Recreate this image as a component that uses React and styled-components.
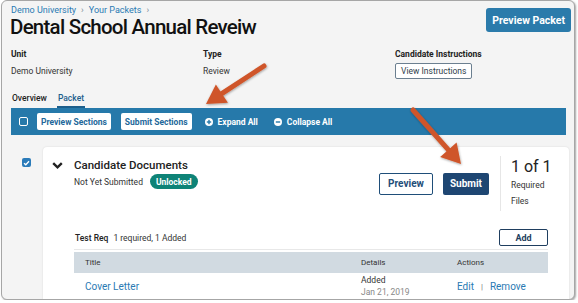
import React from "react";
import styled, { createGlobalStyle } from "styled-components";

const Global = createGlobalStyle`
  html, body { margin: 0; padding: 0; background: #ffffff; }
  body { font-family: Roboto, "Liberation Sans", Arial, sans-serif; color: #2b2b2b; }
  * { box-sizing: border-box; }
`;

const Window = styled.div`
  position: relative;
  margin: 0 3px 0 1px;
  height: 300px;
  border: 1px solid #a6a6a6;
  border-radius: 6px;
  background: #f4f4f4;
  overflow: hidden;
  box-shadow: 1px 1px 2px rgba(0, 0, 0, 0.35);
`;

const Header = styled.div`
  display: flex;
  justify-content: space-between;
  align-items: flex-start;
  padding: 3px 3px 0 9px;
`;

const Breadcrumb = styled.div`
  display: flex;
  gap: 5px;
  font-size: 9px;
  line-height: 12px;
  color: #2a7ab3;
`;

const Crumb = styled.span`
  color: ${(p) => (p.sep ? "#7a8a96" : "#2a7ab3")};
`;

const Title = styled.h1`
  margin: 1px 0 0 -1px;
  font-family: Roboto, sans-serif;
  font-weight: 500;
  font-size: 20.5px;
  line-height: 20px;
  letter-spacing: -0.75px;
  color: #111;
`;

const PrimaryBtn = styled.button`
  margin-top: 4px;
  height: 24px;
  padding: 0 6px;
  border: none;
  border-radius: 3px;
  background: #2b7bab;
  color: #fff;
  font-family: Roboto, sans-serif;
  font-weight: 700;
  font-size: 10.5px;
`;

const Meta = styled.div`
  display: grid;
  grid-template-columns: 192px 192px auto;
  padding-left: 9px;
  margin-top: 11px;
`;

const MetaCol = styled.div`
  display: flex;
  flex-direction: column;
  align-items: flex-start;
`;

const Label = styled.div`
  font-size: 8.5px;
  line-height: 12px;
  font-weight: 700;
  color: #222;
`;

const Value = styled.div`
  margin-top: 5px;
  font-size: 8.5px;
  line-height: 12px;
  color: #333;
`;

const OutlineBtn = styled.button`
  margin-top: 3px;
  height: 16px;
  padding: 0 5px;
  border: 1px solid #6b7f90;
  border-radius: 2px;
  background: #fff;
  color: #2f3d4a;
  font-family: Roboto, sans-serif;
  font-size: 8.5px;
`;

const Tabs = styled.div`
  display: flex;
  gap: 9px;
  padding-left: 9px;
  margin-top: 13px;
`;

const Tab = styled.div`
  font-size: 8.5px;
  line-height: 12px;
  font-weight: 500;
  padding: 0 1px 2px;
  border-bottom: 2px solid ${(p) => (p.active ? "#1d5f8c" : "transparent")};
  color: ${(p) => (p.active ? "#1d5f8c" : "#222")};
`;

const Toolbar = styled.div`
  display: flex;
  align-items: center;
  height: 27px;
  margin: 0 8px 0 9px;
  padding-left: 8px;
  background: #2679aa;
`;

const ToolCheck = styled.div`
  width: 9px;
  height: 9px;
  border: 1.5px solid #fff;
  border-radius: 2px;
  margin-right: 9px;
`;

const ToolBtn = styled.button`
  height: 17px;
  padding: 0 4px;
  margin-right: 10px;
  border: none;
  border-radius: 2px;
  background: #fff;
  color: #23689a;
  font-family: Roboto, sans-serif;
  font-weight: 700;
  font-size: 8.5px;
`;

const ToolLink = styled.div`
  display: flex;
  align-items: center;
  gap: 5px;
  margin-left: ${(p) => p.ml || 0}px;
  color: #fff;
  font-size: 8.5px;
  font-weight: 700;
`;

const Body = styled.div`
  display: flex;
  margin-top: 12px;
`;

const Gutter = styled.div`
  width: 41px;
  padding: 11px 0 0 20px;
`;

const CheckedBox = styled.div`
  width: 9px;
  height: 9px;
  border-radius: 2px;
  background: #2b7bb9;
  display: flex;
  align-items: center;
  justify-content: center;
`;

const Card = styled.div`
  flex: 1;
  margin-right: 5px;
  height: 160px;
  background: #fff;
  border-radius: 4px 4px 0 0;
  box-shadow: 0 0 2px rgba(0, 0, 0, 0.12);
  padding: 10px 0 0 9px;
`;

const TopRow = styled.div`
  display: flex;
  align-items: flex-start;
`;

const Chevron = styled.div`
  width: 22px;
  padding-top: 5px;
  svg { display: block; }
`;

const TitleBlock = styled.div`
  flex: 1;
`;

const CardTitle = styled.div`
  font-size: 11.5px;
  line-height: 16px;
  font-weight: 500;
  color: #222;
`;

const StatusRow = styled.div`
  display: flex;
  align-items: center;
  gap: 7px;
  margin-top: 1px;
`;

const StatusText = styled.span`
  font-size: 8.5px;
  color: #333;
`;

const Badge = styled.span`
  display: inline-flex;
  align-items: center;
  height: 15px;
  padding: 0 6px;
  border-radius: 8px;
  background: #0e8377;
  color: #fff;
  font-size: 8.5px;
  font-weight: 700;
`;

const RightGroup = styled.div`
  display: flex;
  align-items: center;
  margin-top: -1px;
`;

const CardBtn = styled.button`
  height: 22px;
  padding: 0 ${(p) => (p.solid ? 7 : 8)}px;
  margin-right: ${(p) => p.mr}px;
  border: ${(p) => (p.solid ? "none" : "1.5px solid #1f4e79")};
  border-radius: 2px;
  background: ${(p) => (p.solid ? "#1e4672" : "#fff")};
  color: ${(p) => (p.solid ? "#fff" : "#1f4e79")};
  font-family: Roboto, sans-serif;
  font-weight: 700;
  font-size: 10px;
`;

const Divider = styled.div`
  width: 1px;
  height: 55px;
  background: #e6e6e6;
  margin-right: 10px;
`;

const Count = styled.div`
  width: 58px;
  margin-top: -2px;
`;

const CountBig = styled.div`
  font-size: 16px;
  line-height: 20px;
  color: #222;
`;

const CountSmall = styled.div`
  font-size: 8.5px;
  line-height: 16px;
  color: #333;
`;

const Section = styled.div`
  margin: 18px 21px 0 22px;
`;

const ReqRow = styled.div`
  display: flex;
  align-items: center;
  justify-content: space-between;
  padding-left: 1px;
  padding-bottom: 3px;
  border-bottom: 1px solid #e8e8e8;
`;

const ReqText = styled.div`
  font-size: 8.5px;
  color: #333;
  b { font-weight: 500; color: #222; margin-right: 5px; }
`;

const AddBtn = styled.button`
  width: 49px;
  height: 17px;
  border: 1.5px solid #1f3e5f;
  border-radius: 2px;
  background: #fff;
  color: #1f3e5f;
  font-family: Roboto, sans-serif;
  font-weight: 700;
  font-size: 9px;
`;

const TableHead = styled.div`
  display: grid;
  grid-template-columns: 276px 96px 1fr;
  align-items: center;
  height: 21px;
  margin-top: 2px;
  padding-left: 11px;
  background: #d1dae1;
  font-size: 8px;
  color: #333;
`;

const TableRow = styled.div`
  display: grid;
  grid-template-columns: 276px 96px 1fr;
  align-items: center;
  padding: 1px 0 0 11px;
`;

const LinkText = styled.span`
  color: #2a7ab3;
  font-size: ${(p) => p.size || 10}px;
`;

const Details = styled.div`
  font-size: 8.5px;
  line-height: 12px;
  color: #333;
`;

const Muted = styled.div`
  color: #888;
`;

const Actions = styled.div`
  display: flex;
  align-items: center;
  gap: 7px;
`;

const Pipe = styled.span`
  color: #777;
  font-size: 8px;
`;

const Overlay = styled.svg`
  position: absolute;
  left: -2px;
  top: -1px;
  pointer-events: none;
`;

function Arrow({ tail, tip }) {
  const dx = tip[0] - tail[0];
  const dy = tip[1] - tail[1];
  const len = Math.hypot(dx, dy);
  const ux = dx / len;
  const uy = dy / len;
  const nx = -uy;
  const ny = ux;
  const hl = 19;
  const hw = 11;
  const bx = tip[0] - ux * hl;
  const by = tip[1] - uy * hl;
  const pts = [
    [bx + nx * hw, by + ny * hw],
    tip,
    [bx - nx * hw, by - ny * hw],
  ]
    .map((p) => p.join(","))
    .join(" ");
  return (
    <g filter="url(#sh)">
      <line x1={tail[0]} y1={tail[1]} x2={bx + ux * 2} y2={by + uy * 2} stroke="#cf5529" strokeWidth="5" strokeLinecap="round" />
      <polygon points={pts} fill="#cf5529" />
    </g>
  );
}

const PlusCircle = ({ minus }) => (
  <svg width="8" height="8" viewBox="0 0 8 8">
    <circle cx="4" cy="4" r="4" fill="#fff" />
    <rect x="1.8" y="3.3" width="4.4" height="1.4" fill="#2679aa" />
    {!minus && <rect x="3.3" y="1.8" width="1.4" height="4.4" fill="#2679aa" />}
  </svg>
);

export default function App() {
  return (
    <>
      <Global />
      <Window>
        <Header>
          <div>
            <Breadcrumb>
              <Crumb>Demo University</Crumb>
              <Crumb sep>›</Crumb>
              <Crumb>Your Packets</Crumb>
              <Crumb sep>›</Crumb>
            </Breadcrumb>
            <Title>Dental School Annual Reveiw</Title>
          </div>
          <PrimaryBtn>Preview Packet</PrimaryBtn>
        </Header>

        <Meta>
          <MetaCol>
            <Label>Unit</Label>
            <Value>Demo University</Value>
          </MetaCol>
          <MetaCol>
            <Label>Type</Label>
            <Value>Review</Value>
          </MetaCol>
          <MetaCol>
            <Label>Candidate Instructions</Label>
            <OutlineBtn>View Instructions</OutlineBtn>
          </MetaCol>
        </Meta>

        <Tabs>
          <Tab>Overview</Tab>
          <Tab active>Packet</Tab>
        </Tabs>

        <Toolbar>
          <ToolCheck />
          <ToolBtn>Preview Sections</ToolBtn>
          <ToolBtn>Submit Sections</ToolBtn>
          <ToolLink ml={3}>
            <PlusCircle />
            Expand All
          </ToolLink>
          <ToolLink ml={16}>
            <PlusCircle minus />
            Collapse All
          </ToolLink>
        </Toolbar>

        <Body>
          <Gutter>
            <CheckedBox>
              <svg width="7" height="6" viewBox="0 0 7 6">
                <path d="M1 3.2 L2.8 4.8 L6 1.2" stroke="#fff" strokeWidth="1.3" fill="none" />
              </svg>
            </CheckedBox>
          </Gutter>
          <Card>
            <TopRow>
              <Chevron>
                <svg width="11" height="7" viewBox="0 0 11 7">
                  <path d="M1.2 1.2 L5.5 5.3 L9.8 1.2" stroke="#222" strokeWidth="2.4" fill="none" />
                </svg>
              </Chevron>
              <TitleBlock>
                <CardTitle>Candidate Documents</CardTitle>
                <StatusRow>
                  <StatusText>Not Yet Submitted</StatusText>
                  <Badge>Unlocked</Badge>
                </StatusRow>
              </TitleBlock>
              <RightGroup>
                <CardBtn mr={10}>Preview</CardBtn>
                <CardBtn solid mr={11}>Submit</CardBtn>
                <Divider />
                <Count>
                  <CountBig>1 of 1</CountBig>
                  <CountSmall>Required</CountSmall>
                  <CountSmall>Files</CountSmall>
                </Count>
              </RightGroup>
            </TopRow>

            <Section>
              <ReqRow>
                <ReqText>
                  <b>Test Req</b>1 required, 1 Added
                </ReqText>
                <AddBtn>Add</AddBtn>
              </ReqRow>
              <TableHead>
                <span>Title</span>
                <span>Details</span>
                <span>Actions</span>
              </TableHead>
              <TableRow>
                <LinkText>Cover Letter</LinkText>
                <Details>
                  <div>Added</div>
                  <Muted>Jan 21, 2019</Muted>
                </Details>
                <Actions>
                  <LinkText>Edit</LinkText>
                  <Pipe>|</Pipe>
                  <LinkText>Remove</LinkText>
                </Actions>
              </TableRow>
            </Section>
          </Card>
        </Body>

        <Overlay width="578" height="303" viewBox="0 0 578 303">
          <defs>
            <filter id="sh" x="-20%" y="-20%" width="140%" height="140%">
              <feDropShadow dx="0.5" dy="1" stdDeviation="0.8" floodColor="#000" floodOpacity="0.35" />
            </filter>
          </defs>
          <Arrow tail={[264, 66]} tip={[206, 104]} />
          <Arrow tail={[413, 110]} tip={[461, 164]} />
        </Overlay>
      </Window>
    </>
  );
}
